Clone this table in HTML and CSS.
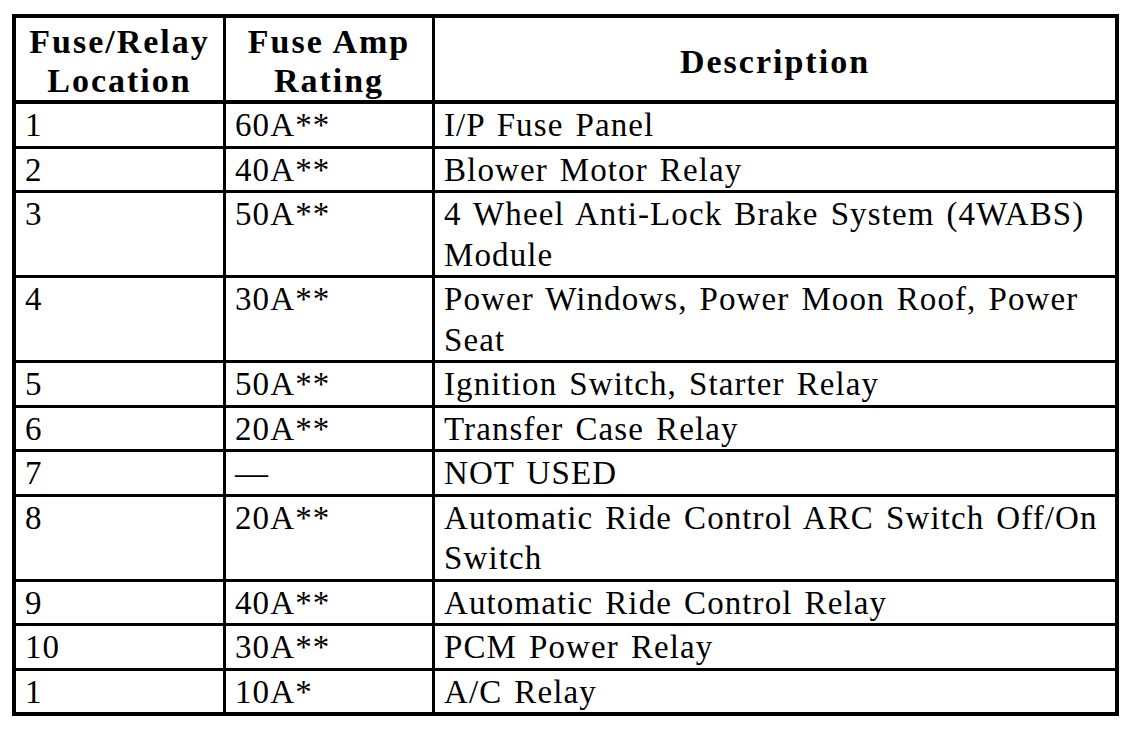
FILE: index.html
```html
<!DOCTYPE html>
<html lang="en">
<head>
<meta charset="utf-8">
<title>Fuse/Relay Table</title>
<link rel="stylesheet" href="styles.css">
</head>
<body>
<table class="fuse-table">
  <colgroup>
    <col class="col-loc">
    <col class="col-amp">
    <col class="col-desc">
  </colgroup>
  <thead>
    <tr>
      <th>Fuse/Relay<br>Location</th>
      <th>Fuse Amp<br>Rating</th>
      <th>Description</th>
    </tr>
  </thead>
  <tbody>
    <tr><td>1</td><td>60A**</td><td>I/P Fuse Panel</td></tr>
    <tr><td>2</td><td>40A**</td><td>Blower Motor Relay</td></tr>
    <tr><td>3</td><td>50A**</td><td>4 Wheel Anti-Lock Brake System (4WABS) Module</td></tr>
    <tr><td>4</td><td>30A**</td><td>Power Windows, Power Moon Roof, Power Seat</td></tr>
    <tr><td>5</td><td>50A**</td><td>Ignition Switch, Starter Relay</td></tr>
    <tr><td>6</td><td>20A**</td><td>Transfer Case Relay</td></tr>
    <tr><td>7</td><td>—</td><td>NOT USED</td></tr>
    <tr><td>8</td><td>20A**</td><td>Automatic Ride Control ARC Switch Off/On Switch</td></tr>
    <tr><td>9</td><td>40A**</td><td>Automatic Ride Control Relay</td></tr>
    <tr><td>10</td><td>30A**</td><td>PCM Power Relay</td></tr>
    <tr><td>1</td><td>10A*</td><td>A/C Relay</td></tr>
  </tbody>
</table>
</body>
</html>
```

FILE: styles.css
```css
html, body {
  margin: 0;
  padding: 0;
  background: #ffffff;
}

body {
  font-family: "Liberation Serif", "Times New Roman", serif;
  color: #000000;
}

.fuse-table {
  margin: 14px 0 0 12px;
  width: 1107px;
  table-layout: fixed;
  border-collapse: separate;
  border-spacing: 0;
  border: 4px solid #000000;
}

.col-loc { width: 210px; }
.col-amp { width: 209px; }
.col-desc { width: 680px; }

.fuse-table th,
.fuse-table td {
  border-right: 3px solid #000000;
  border-bottom: 3px solid #000000;
  padding: 0 9px;
}

.fuse-table th:last-child,
.fuse-table td:last-child {
  border-right: none;
}

.fuse-table tbody tr:last-child td {
  border-bottom: none;
}

.fuse-table th {
  font-size: 34px;
  font-weight: bold;
  line-height: 39px;
  letter-spacing: 2px;
  text-align: center;
  vertical-align: middle;
  padding-top: 4px;
  border-bottom: 4px solid #000000;
}

.fuse-table td {
  font-size: 33px;
  font-weight: normal;
  line-height: 40.5px;
  padding-top: 1px;
  letter-spacing: 1.1px;
  word-spacing: 2.7px;
  text-align: left;
  vertical-align: top;
}
```
